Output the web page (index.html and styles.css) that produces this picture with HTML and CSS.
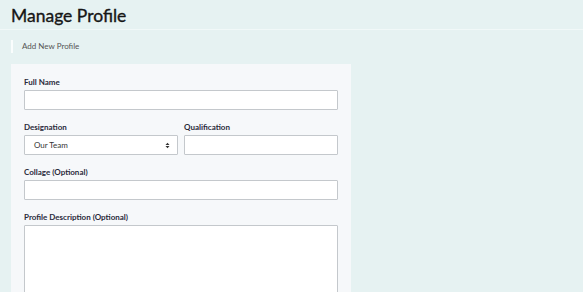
FILE: index.html
```html
<!DOCTYPE html>
<html lang="en">

<head>
    <meta charset="UTF-8">
    <meta name="viewport" content="width=device-width, initial-scale=1.0">
    <title>Manage Profile</title>
    <link rel="stylesheet" href="styles.css">
</head>

<body>
    <div class="page-header">
        <h1>Manage Profile</h1>
    </div>

    <div class="crumb">Add New Profile</div>

    <div class="card">
        <form>
            <div class="field">
                <label for="fullName">Full Name</label>
                <input type="text" id="fullName">
            </div>

            <div class="row">
                <div class="field">
                    <label for="designation">Designation</label>
                    <div class="select-box">
                        <span>Our Team</span>
                        <svg width="5" height="7" viewBox="0 0 5 7">
                            <path d="M0.5 3 L2.5 0.8 L4.5 3 Z M0.5 4 L2.5 6.2 L4.5 4 Z" fill="#333" />
                        </svg>
                    </div>
                </div>
                <div class="field">
                    <label for="qualification">Qualification</label>
                    <input type="text" id="qualification">
                </div>
            </div>

            <div class="field">
                <label for="collage">Collage (Optional)</label>
                <input type="text" id="collage">
            </div>

            <div class="field">
                <label for="description">Profile Description (Optional)</label>
                <textarea id="description"></textarea>
            </div>
        </form>
    </div>
</body>

</html>
```

FILE: styles.css
```css
body {
    font-family: Lato, "Open Sans", sans-serif;
    background-color: #e6f2f2;
    margin: 0;
    padding: 0;
    overflow: hidden;
}

.page-header {
    padding: 4px 11px 0;
    height: 25px;
    border-bottom: 1px solid #f1f8f8;
}

h1 {
    margin: 0;
    font-size: 17.5px;
    font-weight: 400;
    -webkit-text-stroke: 0.35px #161616;
    color: #161616;
    line-height: 24px;
}

.crumb {
    margin: 10px 0 0 11px;
    padding-left: 9px;
    border-left: 2px solid #fafdfd;
    font-size: 8px;
    line-height: 13px;
    color: #555;
}

.card {
    margin: 11px 0 0 11px;
    width: 314px;
    padding: 13px 13px 40px;
    background-color: #f6f8fa;
}

.field {
    display: flex;
    flex-direction: column;
    margin-bottom: 12px;
}

.row {
    display: flex;
    gap: 6px;
}

.row .field {
    flex: 1;
}

label {
    font-size: 8px;
    font-weight: 700;
    color: #2a2a3a;
    line-height: 10px;
    margin-bottom: 3px;
}

input,
textarea,
.select-box {
    box-sizing: border-box;
    width: 100%;
    height: 20px;
    margin: 0;
    border: 1px solid #c4c8cc;
    border-radius: 1px;
    background-color: #fff;
    font-family: inherit;
}

textarea {
    height: 90px;
    resize: none;
}

.select-box {
    display: flex;
    align-items: center;
    justify-content: space-between;
    padding: 0 7px 0 9px;
    font-size: 8px;
    color: #333;
}
```
